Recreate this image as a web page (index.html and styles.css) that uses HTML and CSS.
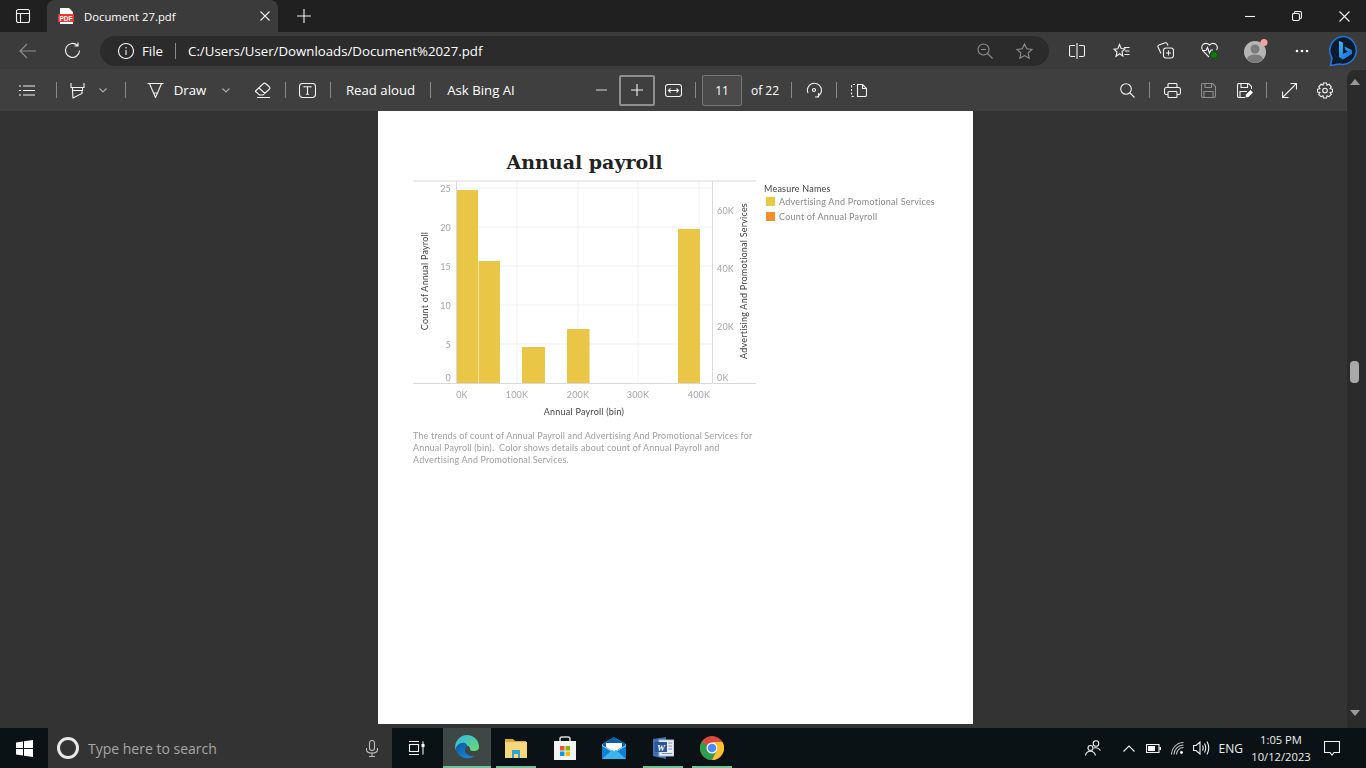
FILE: index.html
```html
<!DOCTYPE html>
<html lang="en">
<head>
  <meta charset="UTF-8">
  <title>Document 27.pdf</title>
  <link rel="stylesheet" href="styles.css">
</head>
<body>

  <!-- Tabs -->
  <div class="tabbar">
    <div class="tab-side">
      <svg width="16" height="16" viewBox="0 0 16 16"><rect x="1.5" y="1.5" width="13" height="13" rx="2" class="st"/><path d="M5.5 5.5V14M1.5 5.5H14.5" class="st"/></svg>
    </div>
    <div class="tab">
      <svg class="tab-fav" width="16" height="16" viewBox="0 0 16 16"><path d="M2 0H11L15 4V16H2Z" fill="#fff"/><rect x="0" y="6" width="16" height="8" fill="#e53935"/><text x="8" y="12.5" class="pdf-mark">PDF</text></svg>
      <span class="tab-title">Document 27.pdf</span>
      <svg class="tab-close" width="10" height="10" viewBox="0 0 10 10"><path d="M.5.5L9.5 9.5M9.5.5L.5 9.5" class="st"/></svg>
    </div>
    <svg class="tab-new" width="14" height="14" viewBox="0 0 14 14"><path d="M7 0V14M0 7H14" class="st"/></svg>
    <div class="win-btns">
      <svg width="10" height="10" viewBox="0 0 10 10"><path d="M0 5.5H10" class="st"/></svg>
      <svg width="10" height="10" viewBox="0 0 10 10"><rect x=".5" y="2.5" width="7" height="7" rx="1.5" class="st"/><path d="M2.5 2.5V1.5Q2.500.5 3.500.5H8Q9.500.5 9.500 2V6.500Q9.500 7.500 8 7.500" class="st"/></svg>
      <svg width="11" height="11" viewBox="0 0 11 11"><path d="M.5.5L10.500 10.500M10.500.5L.5 10.500" class="st"/></svg>
    </div>
  </div>

  <!-- Address bar -->
  <div class="addressbar">
    <svg class="nav-back" width="18" height="16" viewBox="0 0 18 16"><path d="M17 8H1M8 1L1 8L8 15" class="st dim"/></svg>
    <svg class="nav-reload" width="17" height="17" viewBox="0 0 17 17"><path d="M13.500 3.500A7 7 0 1 0 15.500 8.500M14 .5V4H10.500" class="st"/></svg>
    <div class="urlbox">
      <svg width="16" height="16" viewBox="0 0 16 16"><circle cx="8" cy="8" r="7.500" class="st"/><path d="M8 7V12M8 4V5.500" class="st"/></svg>
      <span class="url-file">File</span>
      <span class="url-sep"></span>
      <span class="url-text">C:/Users/User/Downloads/Document%2027.pdf</span>
      <svg class="url-zoom" width="16" height="16" viewBox="0 0 16 16"><circle cx="6.500" cy="6.500" r="5.500" class="st dim"/><path d="M10.500 10.500L15.500 15.500M4 6.500H9" class="st dim"/></svg>
      <svg class="url-star" width="17" height="16" viewBox="0 0 17 16"><path d="M8.500 1L10.700 5.800L16 6.400L12.100 10L13.200 15.300L8.500 12.600L3.800 15.300L4.900 10L1 6.400L6.300 5.800Z" class="st dim"/></svg>
    </div>
    <div class="browser-btns">
      <span class="bb"><svg width="16" height="16" viewBox="0 0 16 16"><path d="M8 0V16M6 2.500H2Q.5 2.500.5 4V12Q.5 13.500 2 13.500H6M10 2.500H14Q15.500 2.500 15.500 4V12Q15.500 13.500 14 13.500H10" class="st"/></svg></span>
      <span class="bb"><svg width="17" height="16" viewBox="0 0 17 16"><path d="M6.500 1.500L8.200 5.500L12 6L9 8.700L9.800 13L6.500 10.800L3 13.500L4 9L1 6.200L4.800 5.700ZM11 4.500H16.500M12 8H16.500M11.500 11.500H16.500" class="st"/></svg></span>
      <span class="bb"><svg width="17" height="17" viewBox="0 0 17 17"><path d="M4 11.500L1 5Q.5 3.500 2 3L8 .8Q9.500.5 10 1.500L11 3.500" class="st"/><rect x="6.500" y="6" width="10" height="10" rx="2.500" class="st"/><path d="M11.500 8.500V13.500M9 11H14" class="st"/></svg></span>
      <span class="bb"><svg width="17" height="17" viewBox="0 0 17 17"><path d="M8 15L2 9Q-.5 5.500 2 2.500Q5.500 0 8.500 3Q11.500 0 15 2.500Q17.500 5.500 15.500 8M1 8.500H5L6.500 5.500L8.500 11L10 8H12" class="st"/><circle cx="13" cy="13" r="3.500" fill="#107c10" stroke="#0b4f0b"/></svg></span>
      <span class="bb bb-avatar"><svg width="24" height="24" viewBox="0 0 24 24"><circle cx="11" cy="13" r="11" fill="#b5b5b5"/><circle cx="11" cy="10" r="4.500" fill="#7b7b7b"/><path d="M3 20Q4 15.500 11 15.500Q18 15.500 19 20Q15.500 24 11 24Q6.500 24 3 20Z" fill="#7b7b7b"/><circle cx="20" cy="3.500" r="3.500" fill="#f1a3a0"/></svg></span>
      <span class="bb bb-dots"><svg width="14" height="4" viewBox="0 0 14 4"><circle cx="2" cy="2" r="1.300" fill="#fff"/><circle cx="7" cy="2" r="1.300" fill="#fff"/><circle cx="12" cy="2" r="1.300" fill="#fff"/></svg></span>
      <span class="bb bb-bing">
        <svg width="32" height="32" viewBox="0 0 32 32"><defs><linearGradient id="bingGrad" x1="0" y1="0" x2="1" y2="1"><stop offset="0" stop-color="#37bdf0"/><stop offset="1" stop-color="#1d62d8"/></linearGradient></defs><path d="M16 1.500A14 14 0 1 1 11 29L2.500 30.500L4 23A14 14 0 0 1 16 1.500Z" fill="#0c1a2c" stroke="#1f78e0" stroke-width="1.500"/><path d="M11 6L15 7.500V19L20 16.500L17.500 15L16.500 11.500L24 15V19L15 24.500L11 22Z" fill="url(#bingGrad)"/></svg>
      </span>
    </div>
  </div>

  <!-- PDF toolbar -->
  <div class="pdfbar">
    <span><svg width="17" height="11" viewBox="0 0 17 11"><path d="M5 1H17M5 5.500H17M5 10H17M1 1H3M1 5.500H3M1 10H3" class="st"/></svg></span>
    <i class="sep"></i>
    <span><svg width="15" height="17" viewBox="0 0 15 17"><path d="M1 1V5.500H14V1M2.500 5.500V8.500H12.500V5.500M2.500 8.500L3 16L12 11.500V8.500" class="st"/></svg></span>
    <span><svg class="chev" width="8" height="5" viewBox="0 0 8 5"><path d="M.5.5L4 4L7.500.5" class="st"/></svg></span>
    <i class="sep"></i>
    <span><svg width="17" height="16" viewBox="0 0 17 16"><path d="M.5 1.500H16.500M2.500 1.500L6.500 11H10.500L14.500 1.500M6.500 11L8.500 15.500L10.500 11" class="st"/></svg></span>
    <span class="pdf-label">Draw</span>
    <span><svg class="chev" width="8" height="5" viewBox="0 0 8 5"><path d="M.5.5L4 4L7.500.5" class="st"/></svg></span>
    <span><svg width="17" height="16" viewBox="0 0 17 16"><path d="M1.500 9L9.500 1.500Q10.500.7 11.500 1.500L15.500 5Q16.300 6 15.500 7L9 13H5.500L1.500 9.500ZM5 6L11 11.500M3 15.500H16" class="st"/></svg></span>
    <i class="sep"></i>
    <span><svg width="17" height="15" viewBox="0 0 17 15"><rect x=".5" y=".5" width="16" height="14" rx="3" class="st"/><path d="M5 4.500V3.800H12V4.500M8.500 3.800V11.200M7 11.200H10" class="st"/></svg></span>
    <i class="sep"></i>
    <span class="pdf-label">Read aloud</span>
    <i class="sep"></i>
    <span class="pdf-label">Ask Bing AI</span>
    <b></b>
    <span><svg width="11" height="2" viewBox="0 0 11 2"><path d="M0 1H11" stroke="#a6a6a6" stroke-width="1.500"/></svg></span>
    <span class="zoom-in"><svg width="12" height="12" viewBox="0 0 12 12"><path d="M6 0V12M0 6H12" class="st"/></svg></span>
    <span><svg width="17" height="13" viewBox="0 0 17 13"><rect x=".5" y=".5" width="16" height="12" rx="2.500" class="st"/><path d="M3.500 6.500H13.500M5.500 4.500L3.500 6.500L5.500 8.500M11.500 4.500L13.500 6.500L11.500 8.500" class="st"/></svg></span>
    <i class="sep"></i>
    <span class="page-box">11</span>
    <span class="pdf-label pdf-of">of 22</span>
    <i class="sep"></i>
    <span><svg width="16" height="17" viewBox="0 0 16 17"><path d="M2 11A7 7 0 1 1 11.500 14.500M12.500 11V15H9M8 6.500a1.500 1.500 0 1 0 .01 0" class="st"/></svg></span>
    <i class="sep"></i>
    <span><svg width="16" height="13" viewBox="0 0 16 13"><path d="M4 .5H2Q.5.500.5 2V11Q.5 12.500 2 12.500H4" class="st dash"/><path d="M6.500.5H11.500L15.500 4.500V11Q15.500 12.500 14 12.500H6.500V.5ZM11.500.5V4.500H15.500" class="st"/></svg></span>
    <b></b>
    <span><svg width="15" height="15" viewBox="0 0 15 15"><circle cx="6" cy="6" r="5.300" class="st"/><path d="M10 10L14.500 14.500" class="st"/></svg></span>
    <i class="sep"></i>
    <span><svg width="17" height="15" viewBox="0 0 17 15"><path d="M4 5V1.500Q4 .5 5 .5H12Q13 .5 13 1.500V5M4 11.500H2Q.5 11.500.5 10V6.500Q.5 4.500 2.500 4.500H14.500Q16.500 4.500 16.500 6.500V10Q16.500 11.500 15 11.500H13" class="st"/><rect x="4" y="8.500" width="9" height="6" rx="1" class="st"/></svg></span>
    <span><svg width="15" height="15" viewBox="0 0 15 15"><path d="M.5 2Q.5.5 2 .5H11.500L14.500 3.500V13Q14.500 14.500 13 14.500H2Q.5 14.500.5 13ZM4 .5V4.500H10.500V.5M3 14.500V8.500H12V14.500" class="st dim"/></svg></span>
    <span><svg width="16" height="15" viewBox="0 0 16 15"><path d="M8 14.500H2Q.5 14.500.5 13V2Q.5.5 2 .5H11.500L14.500 3.500V6M4 .5V4.500H10.500V.5M3 14.500V8.500H10" class="st"/><path d="M8.500 14.500L9 11.500L13.500 7L16 9.500L11.500 14Z" fill="#fff"/></svg></span>
    <i class="sep"></i>
    <span><svg width="15" height="15" viewBox="0 0 15 15"><path d="M14 1L1 14M8.500.5H14.500V6.500M.5 8.500V14.500H6.500" class="st"/></svg></span>
    <span><svg width="16" height="17" viewBox="0 0 16 17"><path d="M6.500 1H9.500L10 3.300L12 2.300L14.300 4.800L13 6.700L15.500 7.200V10L13 10.500L14.300 12.500L12 14.700L10 13.800L9.500 16H6.500L6 13.800L4 14.700L1.700 12.500L3 10.500L.5 10V7.200L3 6.700L1.700 4.800L4 2.300L6 3.300Z" class="st"/><circle cx="8" cy="8.500" r="2.300" class="st"/></svg></span>
  </div>

  <!-- Document area -->
  <div class="viewer">
    <div class="page">
      <h1 class="chart-title">Annual payroll</h1>
      <div class="chart-row">
        <svg class="chart" width="343" height="242" viewBox="413 178 343 242">
          <!-- grid -->
          <g class="grid">
            <path d="M457 188H712M457 227H712M457 266H712M457 305H712M457 344H712"/>
            <path d="M517 181V383M578 181V383M638 181V383M699 181V383"/>
          </g>
          <!-- bars -->
          <g class="bars">
            <rect x="456.500" y="190" width="21.500" height="193"/>
            <rect x="478.500" y="261" width="21.500" height="122"/>
            <rect x="522" y="347" width="23" height="36"/>
            <rect x="567" y="329" width="22.500" height="54"/>
            <rect x="678" y="229" width="22" height="154"/>
          </g>
          <g class="axes">
            <path d="M413 181H756M413 383.500H756M456.500 181V383M712.500 181V383"/>
          </g>
          <!-- y left -->
          <g class="tick tick-end">
            <text x="451" y="192">25</text>
            <text x="451" y="231">20</text>
            <text x="451" y="270">15</text>
            <text x="451" y="309">10</text>
            <text x="451" y="348">5</text>
            <text x="451" y="381">0</text>
          </g>
          <!-- y right -->
          <g class="tick">
            <text x="717" y="214">60K</text>
            <text x="717" y="272">40K</text>
            <text x="717" y="330">20K</text>
            <text x="717" y="381">0K</text>
          </g>
          <!-- x -->
          <g class="tick tick-mid">
            <text x="462" y="398">0K</text>
            <text x="517" y="398">100K</text>
            <text x="578" y="398">200K</text>
            <text x="638" y="398">300K</text>
            <text x="699" y="398">400K</text>
          </g>
          <text class="axis-title" x="584" y="415">Annual Payroll (bin)</text>
          <text class="axis-title" transform="translate(428 281) rotate(-90)">Count of Annual Payroll</text>
          <text class="axis-title" transform="translate(747 281) rotate(-90)">Advertising And Promotional Services</text>
        </svg>
        <div class="legend">
          <div class="legend-head">Measure Names</div>
          <div class="legend-item"><i class="swatch swatch-yellow"></i>Advertising And Promotional Services</div>
          <div class="legend-item"><i class="swatch swatch-orange"></i>Count of Annual Payroll</div>
        </div>
      </div>
      <p class="caption">The trends of count of Annual Payroll and Advertising And Promotional Services for Annual Payroll (bin). &nbsp;Color shows details about count of Annual Payroll and Advertising And Promotional Services.</p>
    </div>
  </div>

  <!-- Scrollbar on top of the document area -->
  <div class="scrollbar">
    <i class="arrow-up"></i>
    <i class="thumb"></i>
    <i class="arrow-down"></i>
  </div>

  <!-- Taskbar -->
  <div class="taskbar">
    <div class="start">
      <svg width="17" height="17" viewBox="0 0 17 17"><path d="M0 2.500L7 1.500V8H0ZM8 1.300L17 0V8H8ZM0 9H7V15.500L0 14.500ZM8 9H17V17L8 15.700Z" fill="#fff"/></svg>
    </div>
    <div class="search">
      <i class="cortana"></i>
      <span class="search-text">Type here to search</span>
      <svg class="search-mic" width="12" height="17" viewBox="0 0 12 17"><rect x="3.500" y=".5" width="5" height="10" rx="2.500" class="st dim2"/><path d="M.5 8V9.500Q.5 13 6 13Q11.500 13 11.500 9.500V8M6 13V16.500M3 16.500H9" class="st dim2"/></svg>
    </div>
    <div class="task-apps">
      <span class="app app-view"><svg width="17" height="14" viewBox="0 0 17 14"><path d="M1 .5H11M1 13.500H11M15 .5V13.500" class="st"/><rect x="1.500" y="3.500" width="9" height="7" class="st"/><rect x="13.500" y="3" width="3" height="3" fill="#fff"/></svg></span>
      <span class="app app-active">
        <svg width="24" height="24" viewBox="0 0 24 24"><defs><linearGradient id="edgeA" x1="0" y1="0" x2="1" y2="1"><stop offset="0" stop-color="#2fb7e8"/><stop offset="1" stop-color="#6cdc6a"/></linearGradient><linearGradient id="edgeB" x1="0" y1="0" x2="1" y2="1"><stop offset="0" stop-color="#0c59a4"/><stop offset="1" stop-color="#1b8fdc"/></linearGradient></defs><path d="M12 0A12 12 0 0 1 24 12Q24 16 19 16Q15 16 15 14Q15 11 11 10Q4 9 .5 15A12 12 0 0 1 12 0Z" fill="url(#edgeA)"/><path d="M.5 13Q4 7 10 8Q13 9 11 12Q8 17 13 20Q16 22 20 20.500A12 12 0 0 1 .5 13Z" fill="url(#edgeB)"/></svg>
      </span>
      <span class="app app-open">
        <svg width="22" height="20" viewBox="0 0 22 20"><path d="M0 1H8L10 3H21V6H0Z" fill="#d9a93c"/><rect x="0" y="4" width="22" height="16" fill="#f6d779"/><path d="M7 12H15V20H13V16H9V20H7Z" fill="#2ea3d8"/></svg>
      </span>
      <span class="app">
        <svg width="24" height="24" viewBox="0 0 24 24"><path d="M7 6V3Q7 1 9 1H15Q17 1 17 3V6" fill="none" stroke="#ddd" stroke-width="1.500"/><path d="M1 5H23V24H1Z" fill="#f4f4f4"/><rect x="7" y="10" width="4.500" height="4.500" fill="#e8562a"/><rect x="12.500" y="10" width="4.500" height="4.500" fill="#7fba00"/><rect x="7" y="15.500" width="4.500" height="4.500" fill="#0b9ce8"/><rect x="12.500" y="15.500" width="4.500" height="4.500" fill="#fdb900"/></svg>
      </span>
      <span class="app">
        <svg width="24" height="22" viewBox="0 0 24 22"><path d="M0 7L12 0L24 7V22H0Z" fill="#0f7fd0"/><path d="M0 7L12 14L24 7V9L12 16L0 9Z" fill="#a8e2fa"/><path d="M0 8L12 15L24 8L12 .8Z" fill="#0a5ea8"/><path d="M4 10L12 15L20 10V6H4Z" fill="#fff"/><path d="M0 22L10 13L12 14L14 13L24 22Z" fill="#3cb4ee"/></svg>
      </span>
      <span class="app app-open">
        <svg width="23" height="22" viewBox="0 0 23 22"><path d="M2 2L15 0V22L2 19Z" fill="#3c6fb5"/><rect x="8" y="3" width="15" height="16" fill="#e9eef6" stroke="#aebbd2"/><rect x="4" y="5" width="12" height="10" fill="#2a5597"/><text x="10" y="13.500" class="word-mark">W</text><path d="M11 16.500H21M17.500 6H21M17.500 9H21M17.500 12H21" stroke="#6f8fbe"/></svg>
      </span>
      <span class="app app-open">
        <svg width="24" height="24" viewBox="0 0 24 24"><circle cx="12" cy="12" r="12" fill="#dd4b3e"/><path d="M12 12L1.600 6A12 12 0 0 0 12 24L18 13.500Z" fill="#2f9e4f"/><path d="M12 6H22.400A12 12 0 0 1 12 24L18 12Z" fill="#fbc02d"/><circle cx="12" cy="12" r="5.500" fill="#fff"/><circle cx="12" cy="12" r="4.300" fill="#4a8af4"/></svg>
      </span>
    </div>
    <div class="tray">
      <span class="tray-people"><svg width="16" height="16" viewBox="0 0 16 16"><circle cx="5.500" cy="8" r="2.500" class="st"/><circle cx="11" cy="3.500" r="2.800" class="st"/><path d="M.5 15.500Q1 11.500 5.500 11Q9.500 11.500 10.500 15.500M9 8Q13 7 15.500 10.500" class="st"/></svg></span>
      <span class="tray-chev"><svg width="12" height="7" viewBox="0 0 12 7"><path d="M.5 6.500L6 1L11.500 6.500" class="st"/></svg></span>
      <span class="tray-batt"><svg width="15" height="9" viewBox="0 0 15 9"><rect x=".5" y=".5" width="12.500" height="8" class="st"/><rect x="2" y="2" width="7" height="5" fill="#fff"/><rect x="13.500" y="3" width="1.500" height="3" fill="#fff"/></svg></span>
      <span class="tray-wifi"><svg width="13" height="13" viewBox="0 0 13 13"><path d="M.5 12.500A12 12 0 0 1 12.500.5M3 12.500A9.500 9.500 0 0 1 12.500 3M5.500 12.500A7 7 0 0 1 12.500 5.500" class="st dim2"/><circle cx="10.500" cy="10.500" r="1.400" fill="#fff"/></svg></span>
      <span class="tray-vol"><svg width="17" height="14" viewBox="0 0 17 14"><path d="M.5 4.500H3L7 1V13L3 9.500H.5ZM9.500 4.500Q11 7 9.500 9.500M11.500 2.500Q14 7 11.500 11.500M14 .5Q17.500 7 14 13.500" class="st"/></svg></span>
      <span class="tray-lang">ENG</span>
      <div class="tray-clock">
        <div>1:05 PM</div>
        <div>10/12/2023</div>
      </div>
      <span class="tray-note"><svg width="16" height="15" viewBox="0 0 16 15"><path d="M.5.5H15.500V11.500H10L8 14L6 11.500H.5Z" class="st"/></svg></span>
    </div>
  </div>

</body>
</html>
```

FILE: styles.css
```css
/* base */
html, body {
  margin: 0;
  padding: 0;
  height: 100%;
}
body {
  position: relative;
  display: flex;
  flex-direction: column;
  width: 1366px;
  height: 768px;
  overflow: hidden;
  background: #333;
  color: #fff;
  font-family: "Open Sans", "Noto Sans", sans-serif;
  font-size: 13px;
}
svg {
  display: block;
  flex: none;
}
.st {
  fill: none;
  stroke: #f2f2f2;
  stroke-width: 1.1;
}
.st.dim {
  stroke: #8f8f8f;
}
.st.dim2 {
  stroke: #bdbdbd;
}
.st.dash {
  stroke-dasharray: 2 1.5;
}

/* tabs */
.tabbar {
  display: flex;
  align-items: center;
  flex: none;
  height: 32px;
  background: #202020;
}
.tab-side {
  display: flex;
  justify-content: center;
  width: 46px;
  margin-right: 1px;
}
.tab {
  display: flex;
  align-items: center;
  align-self: flex-end;
  width: 231px;
  height: 32px;
  box-sizing: border-box;
  padding: 0 7px 0 11px;
  background: #3b3b3b;
  border-radius: 8px 8px 0 0;
}
.tab-fav {
  margin-right: 10px;
}
.pdf-mark {
  font-family: "Liberation Sans", sans-serif;
  font-size: 6.5px;
  font-weight: 700;
  fill: #fff;
  text-anchor: middle;
}
.tab-title {
  flex: 1;
  font-size: 11.300px;
  white-space: nowrap;
}
.tab-close {
  margin-right: 1px;
}
.tab-new {
  margin-left: 19px;
}
.win-btns {
  display: flex;
  align-items: center;
  gap: 37px;
  margin-left: auto;
  padding-right: 16px;
}

/* address bar */
.addressbar {
  display: flex;
  align-items: center;
  flex: none;
  height: 37px;
  background: #3b3b3b;
}
.nav-back {
  margin-left: 19px;
}
.nav-reload {
  margin-left: 27px;
}
.urlbox {
  display: flex;
  align-items: center;
  width: 950px;
  height: 30px;
  box-sizing: border-box;
  margin-left: 19px;
  padding-left: 18px;
  background: #2b2b2b;
  border-radius: 15px;
}
.url-file {
  margin-left: 8px;
  font-size: 13.300px;
}
.url-sep {
  width: 1px;
  height: 16px;
  margin: 0 12px;
  background: #8a8a8a;
}
.url-text {
  font-size: 13.250px;
  white-space: nowrap;
}
.url-zoom {
  margin-left: auto;
}
.url-star {
  margin-left: 23px;
  margin-right: 16px;
}
.browser-btns {
  display: flex;
  align-items: center;
  margin-left: 6px;
}
.bb {
  display: flex;
  justify-content: center;
  width: 44px;
}
.bb-avatar {
  margin-left: 3px;
}
.bb-dots {
  margin-left: 2px;
}
.bb-bing {
  margin-left: -2px;
  height: 30px;
  align-items: center;
}

/* pdf toolbar: one fixed track per item, so each sits where the viewer puts it */
.pdfbar {
  display: grid;
  grid-template-columns: 45px 14px 29px 22px 22px 38px 32px 40px 32px 14px 31px 14px 87px 12px 90px 60px 30px 42px 31px 13px 40px 46px 6px 40px 4px 42px 230px 34px 10px 36px 36px 37px 6px 40px 32px;
  align-items: center;
  justify-items: center;
  flex: none;
  height: 42px;
  box-sizing: border-box;
  padding-left: 4px;
  background: #3f3f3f;
}
.sep {
  display: block;
  width: 1px;
  height: 16px;
  background: #8a8a8a;
}
.chev {
  opacity: .6;
}
.pdf-label {
  font-size: 13.200px;
  white-space: nowrap;
}
.pdf-label.pdf-of {
  font-size: 12px;
}
.zoom-in {
  display: flex;
  align-items: center;
  justify-content: center;
  width: 36px;
  height: 31px;
  box-sizing: border-box;
  border: 2px solid #8e8e8e;
  border-radius: 2px;
}
.page-box {
  width: 40px;
  height: 31px;
  box-sizing: border-box;
  border: 1px solid #777;
  border-radius: 2px;
  background: #4a4a4a;
  line-height: 29px;
  text-align: center;
  font-size: 12px;
}

/* document */
.viewer {
  display: flex;
  justify-content: center;
  flex: none;
  height: 617px;
  box-sizing: border-box;
  padding-bottom: 4px;
  padding-right: 15px;
  background: #333;
}
.page {
  width: 595px;
  height: 613px;
  box-sizing: border-box;
  padding: 38px 0 0 35px;
  background: #fff;
  color: #222;
}
.chart-title {
  width: 343px;
  margin: 0;
  font-family: "DejaVu Serif", serif;
  font-size: 19px;
  font-weight: 700;
  line-height: 26px;
  text-align: center;
  color: #222;
}
.chart-row {
  display: flex;
  margin-top: 3px;
}
.chart {
  filter: blur(.25px);
}
.grid path {
  fill: none;
  stroke: #f1f1f1;
}
.bars rect {
  fill: #e9c646;
}
.axes path {
  fill: none;
  stroke: #d9d9d9;
}
.tick text {
  font-family: "Lato", sans-serif;
  font-size: 9px;
  letter-spacing: .2px;
  fill: #a5a5a5;
}
.tick-end text {
  text-anchor: end;
}
.tick-mid text {
  text-anchor: middle;
}
.axis-title {
  font-family: "Lato", sans-serif;
  font-size: 9px;
  letter-spacing: .22px;
  fill: #444;
  text-anchor: middle;
}
.legend {
  margin: 5px 0 0 8px;
  font-family: "Lato", sans-serif;
  font-size: 9px;
  letter-spacing: .22px;
  filter: blur(.2px);
}
.legend-head {
  height: 11.500px;
  line-height: 12px;
  color: #444;
}
.legend-item {
  display: flex;
  align-items: center;
  height: 14.500px;
  color: #888;
  white-space: nowrap;
}
.swatch {
  width: 9px;
  height: 9px;
  margin: 0 4px 0 2px;
}
.swatch-yellow {
  background: #eac845;
}
.swatch-orange {
  background: #f28e2b;
}
.caption {
  width: 343px;
  margin: 10px 0 0;
  font-family: "Lato", sans-serif;
  font-size: 9px;
  letter-spacing: .15px;
  line-height: 12px;
  color: #a0a0a0;
  filter: blur(.2px);
}

/* scrollbar lies over the viewer */
.scrollbar {
  position: absolute;
  top: 70px;
  right: 0;
  width: 19px;
  height: 658px;
  background: #2b2b2b;
  border-radius: 8px 0 0 0;
}
.arrow-up, .arrow-down {
  position: absolute;
  left: 3px;
  width: 0;
  height: 0;
  border-left: 5px solid transparent;
  border-right: 5px solid transparent;
}
.arrow-up {
  top: 9px;
  border-bottom: 6px solid #9a9a9a;
}
.arrow-down {
  bottom: 12px;
  border-top: 6px solid #9a9a9a;
}
.thumb {
  position: absolute;
  top: 291px;
  left: 3px;
  width: 9px;
  height: 22px;
  background: #a9a9a9;
  border-radius: 4px;
}

/* taskbar */
.taskbar {
  display: flex;
  align-items: center;
  flex: none;
  height: 40px;
  background: #0b1215;
}
.start {
  display: flex;
  justify-content: center;
  width: 48px;
}
.search {
  display: flex;
  align-items: center;
  width: 344px;
  height: 40px;
  box-sizing: border-box;
  padding-left: 9px;
  background: #333;
}
.cortana {
  width: 22px;
  height: 22px;
  box-sizing: border-box;
  border: 3px solid #e8e8e8;
  border-radius: 50%;
}
.search-text {
  margin-left: 9px;
  font-size: 14px;
  color: #a6a6a6;
  white-space: nowrap;
}
.search-mic {
  margin-left: auto;
  margin-right: 14px;
}
.task-apps {
  display: flex;
  height: 40px;
  margin-left: 8px;
}
.app {
  display: flex;
  align-items: center;
  justify-content: center;
  width: 49px;
  height: 40px;
  box-sizing: border-box;
}
.app-view {
  justify-content: flex-start;
  width: 43px;
  padding-left: 8px;
}
.app-active {
  width: 48px;
  background: #3f4646;
  border-bottom: 2px solid #70c399;
}
.app-open {
  position: relative;
}
.app-open::after {
  content: "";
  position: absolute;
  left: 5px;
  right: 4px;
  bottom: 0;
  height: 2px;
  background: #70c399;
}
.word-mark {
  font-family: "Liberation Serif", serif;
  font-size: 9px;
  font-weight: 700;
  font-style: italic;
  fill: #fff;
  text-anchor: middle;
}
.tray {
  display: flex;
  align-items: center;
  margin-left: auto;
  font-size: 12px;
}
.tray-people {
  margin-right: 22px;
}
.tray-chev {
  margin-right: 11px;
}
.tray-batt {
  margin-right: 10px;
}
.tray-wifi {
  margin-right: 9px;
}
.tray-vol {
  margin-right: 9px;
}
.tray-lang {
  margin-right: 7px;
  color: #eee;
}
.tray-clock {
  width: 62px;
  font-size: 11.200px;
  line-height: 17px;
  text-align: center;
  color: #eee;
  white-space: nowrap;
}
.tray-note {
  margin: 0 26px 0 12px;
}
```
